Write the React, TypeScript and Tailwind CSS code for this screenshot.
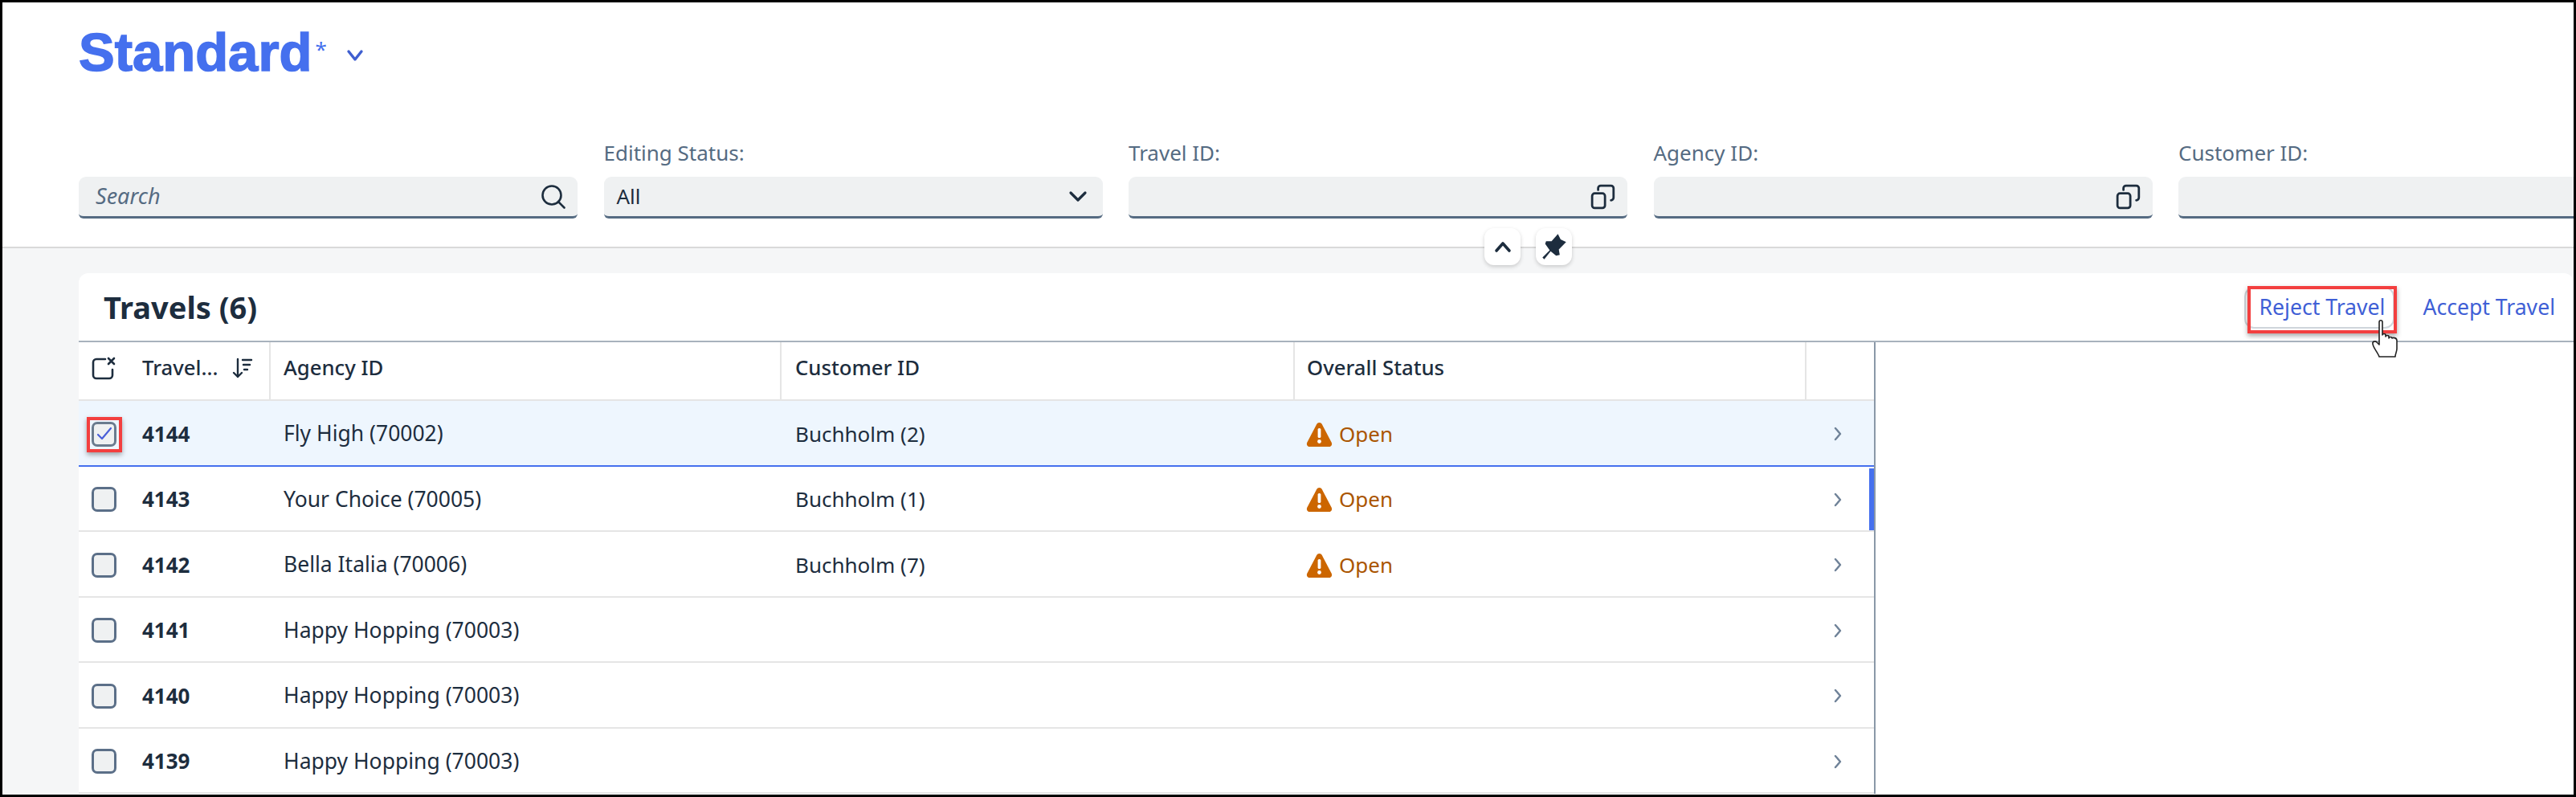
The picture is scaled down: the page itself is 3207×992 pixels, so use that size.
import React from "react";

const ValueHelp = () => (
  <svg width="32" height="32" viewBox="0 0 30 30" fill="none" stroke="#1d2d3e" strokeWidth="2.6" strokeLinecap="round">
    <rect x="2" y="11" width="15" height="17" rx="3" />
    <path d="M9 7V5a3 3 0 0 1 3-3h12a3 3 0 0 1 3 3v11a3 3 0 0 1-3 3" />
  </svg>
);

const Field = ({ label, children, icon, pr }: { label?: string; children?: React.ReactNode; icon?: React.ReactNode; pr?: string }) => (
  <div className="w-[621px] shrink-0 flex flex-col">
    <div className="h-[48px] text-[26px] leading-[36px] text-[#556b82]">{label}</div>
    <div className={`h-[52px] rounded-t-[9px] rounded-b-[6px] bg-[#eff1f2] border-b-[3px] border-[#556b82] flex items-center justify-between pl-[16px] text-[26px] text-[#1d2d3e] ${pr ?? "pr-[14px]"}`}>
      <div>{children}</div>
      {icon}
    </div>
  </div>
);

const Warn = () => (
  <svg width="33" height="31" viewBox="0 0 33 31">
    <path d="M16.5 1c1.5 0 2.6.9 3.4 2.3l11.8 22.4c1.2 2.4-.2 5.3-3 5.3H4.3c-2.8 0-4.2-2.9-3-5.3L13.1 3.3C13.9 1.9 15 1 16.5 1z" fill="#cc6600" />
    <rect x="14.6" y="8" width="3.8" height="12" rx="1.6" fill="#fff" />
    <circle cx="16.5" cy="24.5" r="2.4" fill="#fff" />
  </svg>
);

const Checkbox = ({ checked }: { checked?: boolean }) => (
  <div className={`w-[31px] h-[31px] rounded-[7px] border-[3px] flex items-center justify-center ${checked ? "bg-[#eff1f2] border-[#6a7b8e]" : "bg-[#eff1f2] border-[#5b6f88]"}`}>
    {checked && (
      <svg width="20" height="18" viewBox="0 0 20 18" fill="none" stroke="#4a5fd8" strokeWidth="2.2" strokeLinecap="round" strokeLinejoin="round">
        <path d="M2 10l5 5L18 2" />
      </svg>
    )}
  </div>
);

const rows = [
  { id: "4144", agency: "Fly High (70002)", customer: "Buchholm (2)", open: true, selected: true },
  { id: "4143", agency: "Your Choice (70005)", customer: "Buchholm (1)", open: true, bar: true },
  { id: "4142", agency: "Bella Italia (70006)", customer: "Buchholm (7)", open: true },
  { id: "4141", agency: "Happy Hopping (70003)", customer: "" },
  { id: "4140", agency: "Happy Hopping (70003)", customer: "" },
  { id: "4139", agency: "Happy Hopping (70003)", customer: "" },
];

const Row = ({ r }: { r: (typeof rows)[number] }) => (
  <div className={`relative h-[81.5px] pt-[3px] flex items-center border-b-[2px] text-[26px] text-[#1d2d3e] ${r.selected ? "bg-[#eef6fe] border-[#4570ee]" : "bg-white border-[#e5e5e5]"}`}>
    <div className="w-[79px] shrink-0 pl-[16px] flex items-center">
      <Checkbox checked={r.selected} />
    </div>
    <div className="w-[159px] shrink-0 font-bold">{r.id}</div>
    <div className="w-[636px] shrink-0 pl-[17px] text-[26.5px]">{r.agency}</div>
    <div className="w-[639px] shrink-0 pl-[18px]">{r.customer}</div>
    <div className="w-[637px] shrink-0 pl-[15px] flex items-center gap-[8px] text-[#aa5500]">
      {r.open && <Warn />}
      {r.open && <span>Open</span>}
    </div>
    <div className="flex-1 pl-[34px] flex items-center">
      <svg width="12" height="18" viewBox="0 0 12 18" fill="none" stroke="#6f8298" strokeWidth="2.4" strokeLinecap="round" strokeLinejoin="round">
        <path d="M3 2l6 7-6 7" />
      </svg>
    </div>
    {r.bar && <div className="absolute right-0 top-[2px] bottom-0 w-[6px] bg-[#4570ee]" />}
  </div>
);

const HeadCell = ({ w, children, cls }: { w: string; children?: React.ReactNode; cls?: string }) => (
  <div className={`${w} ${cls ?? ""} shrink-0 h-full border-r-[2px] border-[#e5e5e5] flex items-center pb-[7px]`}>{children}</div>
);

export default function App() {
  return (
    <div className="relative w-[3207px] h-[992px] overflow-hidden border-[3px] border-black bg-[#f5f6f7] font-['Noto_Sans',sans-serif]">
      <header className="h-[306px] bg-white border-b-[2px] border-[#d9d9d9] pl-[95px] overflow-hidden">
        <div className="pt-[27px] flex items-start h-[169px]">
          <span className="text-[67px] leading-[70px] font-bold text-[#4570ee] font-['Liberation_Sans',sans-serif] [-webkit-text-stroke:1.5px_#4570ee]">Standard</span>
          <span className="ml-[4px] mt-[16px] text-[26px] leading-[30px] text-[#4570ee]">*</span>
          <svg className="ml-[24px] mt-[30px]" width="22" height="18" viewBox="0 0 22 18" fill="none" stroke="#3f5fd0" strokeWidth="3.4" strokeLinecap="round" strokeLinejoin="round">
            <path d="M3 4l8 10 8-10" />
          </svg>
        </div>
        <div className="flex gap-[32.5px]">
          <div className="w-[621px] shrink-0 flex flex-col">
            <div className="h-[48px]" />
            <div className="h-[52px] rounded-t-[9px] rounded-b-[6px] bg-[#eff1f2] border-b-[3px] border-[#556b82] flex items-center justify-between pl-[21px] pr-[14px]">
              <span className="text-[27px] italic text-[#556b82]">Search</span>
              <svg width="32" height="32" viewBox="0 0 32 32" fill="none" stroke="#1d2d3e" strokeWidth="2.6" strokeLinecap="round">
                <circle cx="14" cy="14" r="11.5" />
                <path d="M22 22l7.5 7.5" />
              </svg>
            </div>
          </div>
          <Field
            label="Editing Status:"
            pr="pr-[19px]"
            icon={
              <svg width="24" height="16" viewBox="0 0 24 16" fill="none" stroke="#1d2d3e" strokeWidth="3.2" strokeLinecap="round" strokeLinejoin="round">
                <path d="M3 3l9 9 9-9" />
              </svg>
            }
          >
            All
          </Field>
          <Field label="Travel ID:" icon={<ValueHelp />} />
          <Field label="Agency ID:" icon={<ValueHelp />} />
          <Field label="Customer ID:" icon={<ValueHelp />} />
        </div>
      </header>

      <div className="absolute left-[1845px] top-[281px] w-[45px] h-[46px] rounded-[12px] bg-white shadow-[0_2px_5px_rgba(0,0,0,0.18)] flex items-center justify-center">
        <svg width="22" height="16" viewBox="0 0 22 16" fill="none" stroke="#1d2d3e" strokeWidth="3.6" strokeLinecap="round" strokeLinejoin="round">
          <path d="M3 13l8-9 8 9" />
        </svg>
      </div>
      <div className="absolute left-[1909px] top-[281px] w-[45px] h-[46px] rounded-[12px] bg-white shadow-[0_2px_5px_rgba(0,0,0,0.18)] flex items-center justify-center">
        <svg width="34" height="34" viewBox="0 0 30 30">
          <path d="M19 1l3 6 6 3-8 8 1 6-4 1-6-5-7 9-2-2 8-8-5-7 1-3 6 0z" fill="#1d2d3e" />
        </svg>
      </div>

      <div className="ml-[95px] mt-[31px] h-[652px] bg-white rounded-t-[12px] overflow-hidden">
        <div className="h-[86px] border-b-[2px] border-[#a8b2bd] flex items-center justify-between pl-[31px] pr-[23px]">
          <h1 className="text-[38px] font-bold text-[#1d2d3e]">Travels (6)</h1>
          <div className="flex items-center gap-[47px] pt-[2px] text-[26.6px] text-[#3f5fd6]">
            <span>Reject Travel</span>
            <span>Accept Travel</span>
          </div>
        </div>
        <div className="w-[2237px] border-r-[2px] border-[#8a98a8]">
          <div className="h-[73px] flex items-center border-b-[2px] border-[#e5e5e5] text-[25.7px] font-medium text-[#1d2d3e]">
            <HeadCell w="w-[239px]" cls="pl-[16px]">
              <svg width="30" height="30" viewBox="0 0 30 30" fill="none" stroke="#1d2d3e" strokeWidth="2.6" strokeLinecap="round">
                <path d="M17 4H6a4 4 0 0 0-4 4v16a4 4 0 0 0 4 4h16a4 4 0 0 0 4-4V17" />
                <path d="M21 3l7 7M28 3l-7 7" />
              </svg>
              <span className="ml-[33px]">Travel...</span>
              <svg className="ml-[18px]" width="26" height="28" viewBox="0 0 26 28" fill="none" stroke="#1d2d3e" strokeWidth="2.4" strokeLinecap="round" strokeLinejoin="round">
                <path d="M7 3v22M2 20l5 5 5-5M13 4h11M14 10h8M15 16h4" />
              </svg>
            </HeadCell>
            <HeadCell w="w-[636px]" cls="pl-[16px]">Agency ID</HeadCell>
            <HeadCell w="w-[639px]" cls="pl-[17px]">Customer ID</HeadCell>
            <HeadCell w="w-[637px]" cls="pl-[15px]">Overall Status</HeadCell>
          </div>
          {rows.map((r) => (
            <Row key={r.id} r={r} />
          ))}
        </div>
      </div>

      <div className="absolute left-[2791px] top-[354px] w-[187px] h-[52px] rounded-[12px] border-[2px] border-[#cfd5db]" />
      <div className="absolute left-[2795px] top-[353px] w-[186px] h-[59px] border-[4px] border-[#f33f3f] shadow-[0_3px_6px_rgba(0,0,0,0.35)]" />
      <div className="absolute left-[105px] top-[516px] w-[44px] h-[44px] border-[4px] border-[#f33f3f] shadow-[0_3px_6px_rgba(0,0,0,0.35)]" />
      <svg className="absolute left-[2949px] top-[394px]" width="36" height="50" viewBox="0 0 36 50" fill="#fff" stroke="#222" strokeWidth="1.6" strokeLinejoin="round">
        <path d="M10 4c0-3 4-3 4 0v16c0-2 4-2 4 0v2c0-2 4-2 4 0v2c0-2 4-2 4 0 1-1 6-1 6 3v10c0 4-2 6-2 10H10c-1-4-8-12-8-16-1-3 3-4 5-2l3 3z" />
      </svg>
    </div>
  );
}
